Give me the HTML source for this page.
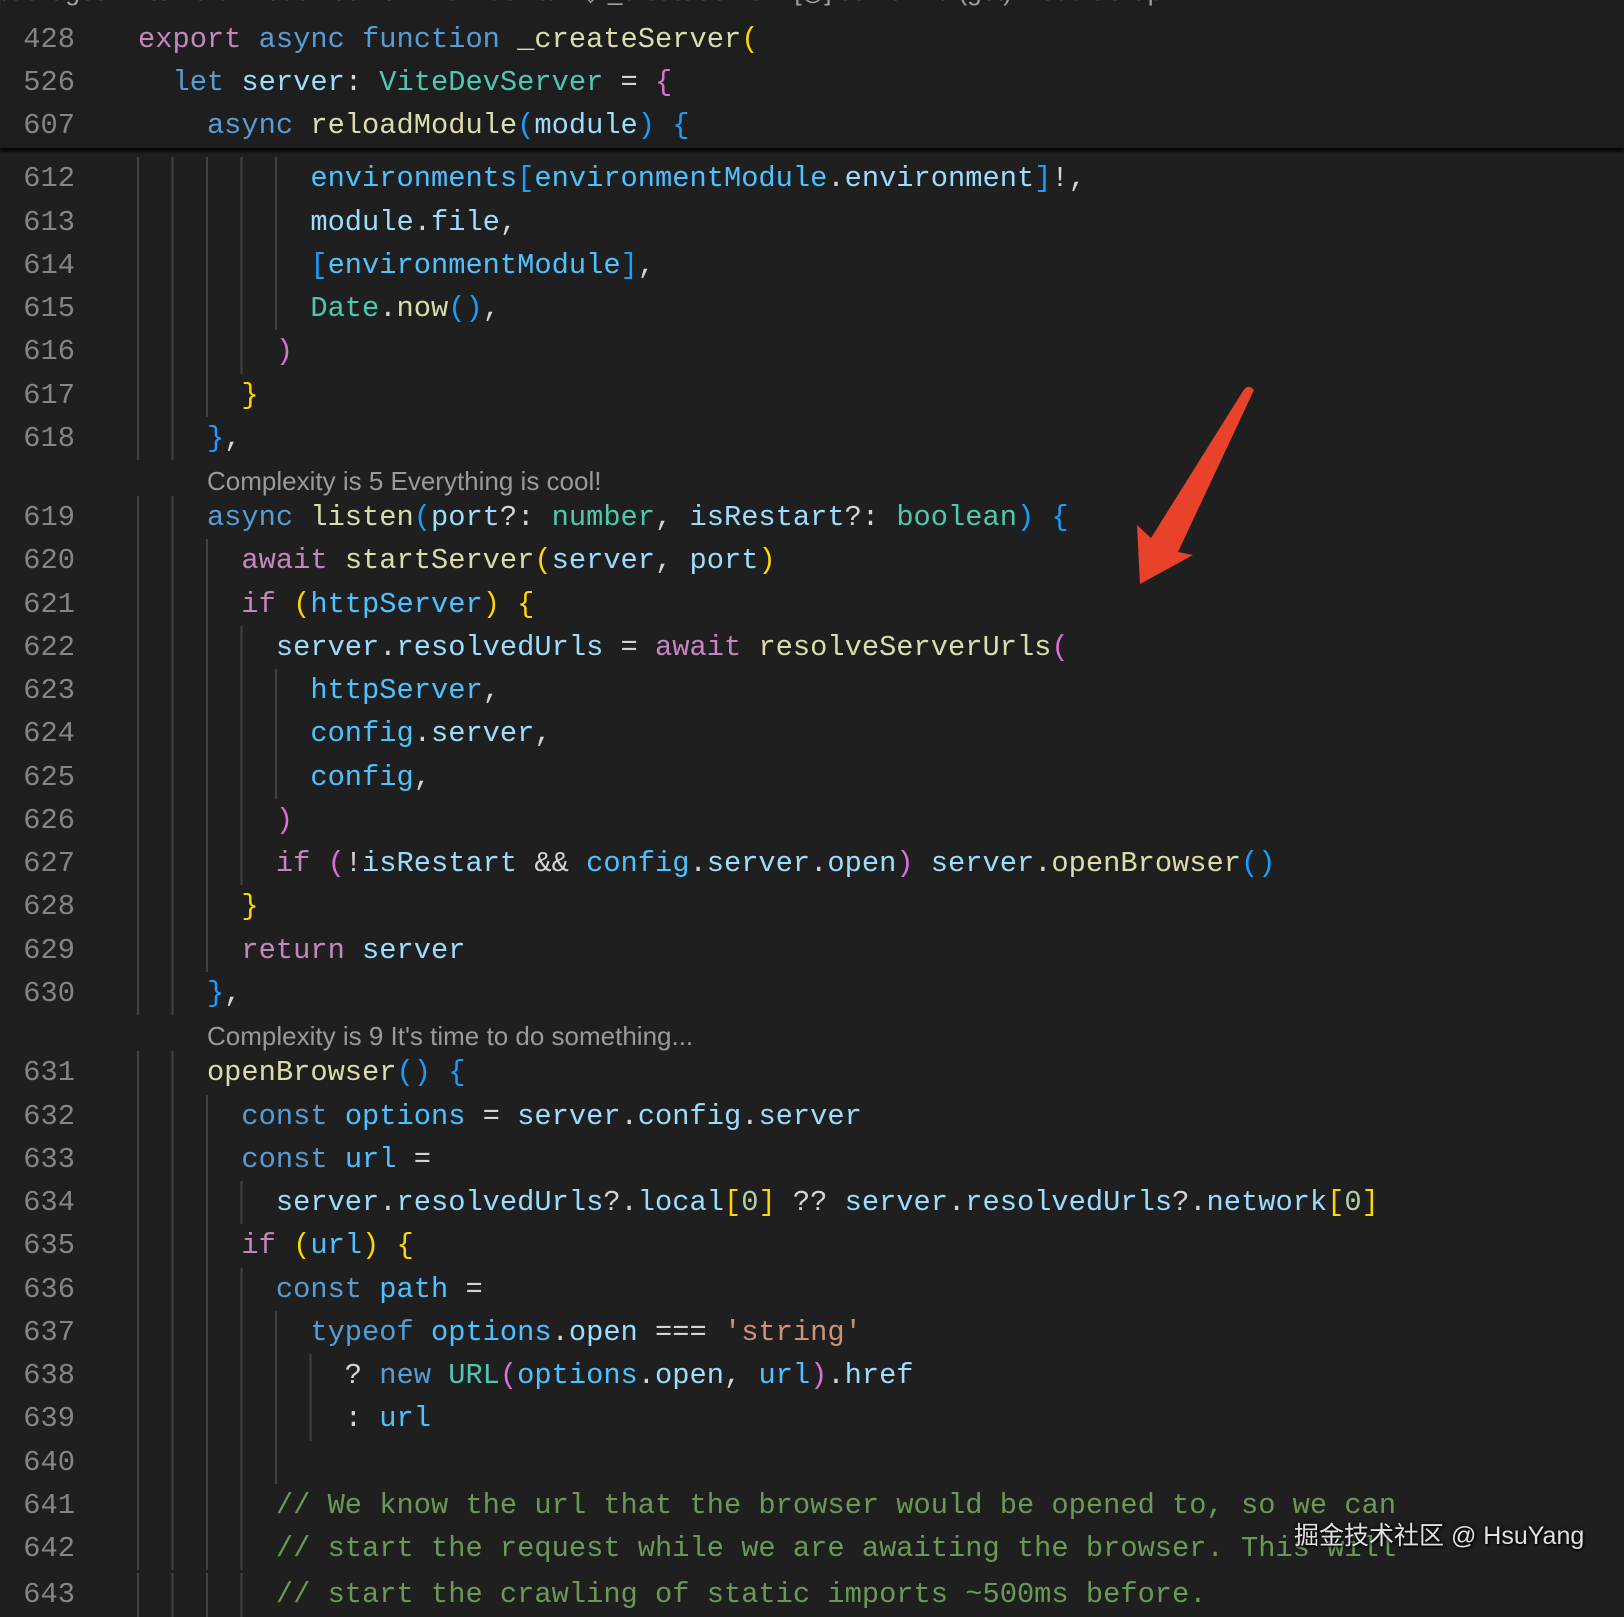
<!DOCTYPE html>
<html><head><meta charset="utf-8"><style>
html,body{margin:0;padding:0;}
body{width:1624px;height:1588px;background:#1f1f1f;position:relative;overflow:hidden;font-family:"Liberation Mono",monospace;font-size:28.72px;}
.l{position:absolute;left:0;width:1624px;height:43.24px;line-height:43.24px;}
.n{position:absolute;left:0;width:75px;text-align:right;color:#858585;}
.c{position:absolute;left:138px;white-space:pre;color:#d4d4d4;}
.g{position:absolute;left:137px;top:0;height:43.24px;background:repeating-linear-gradient(90deg,#424242 0 2px,transparent 2px 34.46px);}
.k{color:#c586c0}.s{color:#569cd6}.f{color:#dcdcaa}.v{color:#9cdcfe}.w{color:#4fc1ff}.t{color:#4ec9b0}
.b1{color:#ffd700}.b2{color:#da70d6}.b3{color:#179fff}.str{color:#ce9178}.cm{color:#6a9955}.nm{color:#b5cea8}
.lens{position:absolute;left:207px;font-family:"Liberation Sans",sans-serif;font-size:26px;color:#9a9a9a;line-height:30px;}
#hdr{position:absolute;left:0;top:0;width:1624px;height:148px;background:#1e1e1e;box-shadow:0 3px 4px #000;z-index:2;}
</style></head><body>
<div id="hdr">
<div style="position:absolute;left:-4px;top:-24px;font-family:'Liberation Sans',sans-serif;font-size:26px;color:#a0a0a0;white-space:pre;">packages › vite › src › node › server › TS index.ts › ◈ _createServer › [◎] server › ⟡ (get) moduleGraph</div>
<div class="l" style="top:18px"><span class="n">428</span><span class="c"><span class="k">export</span> <span class="s">async</span> <span class="s">function</span> <span class="f">_createServer</span><span class="b1">(</span></span></div>
<div class="l" style="top:61px"><span class="n">526</span><span class="c">  <span class="s">let</span> <span class="v">server</span>: <span class="t">ViteDevServer</span> = <span class="b2">{</span></span></div>
<div class="l" style="top:104px"><span class="n">607</span><span class="c">    <span class="s">async</span> <span class="f">reloadModule</span><span class="b3">(</span><span class="v">module</span><span class="b3">)</span> <span class="b3">{</span></span></div>
</div>

<div class="l" style="top:157.4px"><div class="g" style="width:172px"></div><span class="n">612</span><span class="c">          <span class="w">environments</span><span class="b3">[</span><span class="w">environmentModule</span>.<span class="v">environment</span><span class="b3">]</span>!,</span></div>
<div class="l" style="top:200.6px"><div class="g" style="width:172px"></div><span class="n">613</span><span class="c">          <span class="v">module</span>.<span class="v">file</span>,</span></div>
<div class="l" style="top:243.9px"><div class="g" style="width:172px"></div><span class="n">614</span><span class="c">          <span class="b3">[</span><span class="w">environmentModule</span><span class="b3">]</span>,</span></div>
<div class="l" style="top:287.1px"><div class="g" style="width:172px"></div><span class="n">615</span><span class="c">          <span class="t">Date</span>.<span class="f">now</span><span class="b3">()</span>,</span></div>
<div class="l" style="top:330.4px"><div class="g" style="width:138px"></div><span class="n">616</span><span class="c">        <span class="b2">)</span></span></div>
<div class="l" style="top:373.6px"><div class="g" style="width:103px"></div><span class="n">617</span><span class="c">      <span class="b1">}</span></span></div>
<div class="l" style="top:416.8px"><div class="g" style="width:69px"></div><span class="n">618</span><span class="c">    <span class="b3">}</span>,</span></div>
<div class="lens" style="top:465.6px">Complexity is 5 Everything is cool!</div>
<div class="l" style="top:496.2px"><div class="g" style="width:69px"></div><span class="n">619</span><span class="c">    <span class="s">async</span> <span class="f">listen</span><span class="b3">(</span><span class="v">port</span>?: <span class="t">number</span>, <span class="v">isRestart</span>?: <span class="t">boolean</span><span class="b3">)</span> <span class="b3">{</span></span></div>
<div class="l" style="top:539.4px"><div class="g" style="width:103px"></div><span class="n">620</span><span class="c">      <span class="k">await</span> <span class="f">startServer</span><span class="b1">(</span><span class="v">server</span>, <span class="v">port</span><span class="b1">)</span></span></div>
<div class="l" style="top:582.7px"><div class="g" style="width:103px"></div><span class="n">621</span><span class="c">      <span class="k">if</span> <span class="b1">(</span><span class="w">httpServer</span><span class="b1">)</span> <span class="b1">{</span></span></div>
<div class="l" style="top:625.9px"><div class="g" style="width:138px"></div><span class="n">622</span><span class="c">        <span class="v">server</span>.<span class="v">resolvedUrls</span> = <span class="k">await</span> <span class="f">resolveServerUrls</span><span class="b2">(</span></span></div>
<div class="l" style="top:669.2px"><div class="g" style="width:172px"></div><span class="n">623</span><span class="c">          <span class="w">httpServer</span>,</span></div>
<div class="l" style="top:712.4px"><div class="g" style="width:172px"></div><span class="n">624</span><span class="c">          <span class="w">config</span>.<span class="v">server</span>,</span></div>
<div class="l" style="top:755.6px"><div class="g" style="width:172px"></div><span class="n">625</span><span class="c">          <span class="w">config</span>,</span></div>
<div class="l" style="top:798.9px"><div class="g" style="width:138px"></div><span class="n">626</span><span class="c">        <span class="b2">)</span></span></div>
<div class="l" style="top:842.1px"><div class="g" style="width:138px"></div><span class="n">627</span><span class="c">        <span class="k">if</span> <span class="b2">(</span>!<span class="v">isRestart</span> &amp;&amp; <span class="w">config</span>.<span class="v">server</span>.<span class="v">open</span><span class="b2">)</span> <span class="v">server</span>.<span class="f">openBrowser</span><span class="b3">()</span></span></div>
<div class="l" style="top:885.4px"><div class="g" style="width:103px"></div><span class="n">628</span><span class="c">      <span class="b1">}</span></span></div>
<div class="l" style="top:928.6px"><div class="g" style="width:103px"></div><span class="n">629</span><span class="c">      <span class="k">return</span> <span class="v">server</span></span></div>
<div class="l" style="top:971.8px"><div class="g" style="width:69px"></div><span class="n">630</span><span class="c">    <span class="b3">}</span>,</span></div>
<div class="lens" style="top:1020.7px">Complexity is 9 It's time to do something...</div>
<div class="l" style="top:1051.4px"><div class="g" style="width:69px"></div><span class="n">631</span><span class="c">    <span class="f">openBrowser</span><span class="b3">()</span> <span class="b3">{</span></span></div>
<div class="l" style="top:1094.6px"><div class="g" style="width:103px"></div><span class="n">632</span><span class="c">      <span class="s">const</span> <span class="w">options</span> = <span class="v">server</span>.<span class="v">config</span>.<span class="v">server</span></span></div>
<div class="l" style="top:1137.9px"><div class="g" style="width:103px"></div><span class="n">633</span><span class="c">      <span class="s">const</span> <span class="w">url</span> =</span></div>
<div class="l" style="top:1181.1px"><div class="g" style="width:138px"></div><span class="n">634</span><span class="c">        <span class="v">server</span>.<span class="v">resolvedUrls</span>?.<span class="v">local</span><span class="b1">[</span><span class="nm">0</span><span class="b1">]</span> ?? <span class="v">server</span>.<span class="v">resolvedUrls</span>?.<span class="v">network</span><span class="b1">[</span><span class="nm">0</span><span class="b1">]</span></span></div>
<div class="l" style="top:1224.4px"><div class="g" style="width:103px"></div><span class="n">635</span><span class="c">      <span class="k">if</span> <span class="b1">(</span><span class="w">url</span><span class="b1">)</span> <span class="b1">{</span></span></div>
<div class="l" style="top:1267.6px"><div class="g" style="width:138px"></div><span class="n">636</span><span class="c">        <span class="s">const</span> <span class="w">path</span> =</span></div>
<div class="l" style="top:1310.8px"><div class="g" style="width:172px"></div><span class="n">637</span><span class="c">          <span class="s">typeof</span> <span class="w">options</span>.<span class="v">open</span> === <span class="str">'string'</span></span></div>
<div class="l" style="top:1354.1px"><div class="g" style="width:207px"></div><span class="n">638</span><span class="c">            ? <span class="s">new</span> <span class="t">URL</span><span class="b2">(</span><span class="w">options</span>.<span class="v">open</span>, <span class="w">url</span><span class="b2">)</span>.<span class="v">href</span></span></div>
<div class="l" style="top:1397.3px"><div class="g" style="width:207px"></div><span class="n">639</span><span class="c">            : <span class="w">url</span></span></div>
<div class="l" style="top:1440.6px"><div class="g" style="width:172px"></div><span class="n">640</span><span class="c"></span></div>
<div class="l" style="top:1483.8px"><div class="g" style="width:138px"></div><span class="n">641</span><span class="c">        <span class="cm">// We know the url that the browser would be opened to, so we can</span></span></div>
<div class="l" style="top:1527.0px"><div class="g" style="width:138px"></div><span class="n">642</span><span class="c">        <span class="cm">// start the request while we are awaiting the browser. This will</span></span></div>
<div class="l" style="top:1573.3px"><div class="g" style="width:138px"></div><span class="n">643</span><span class="c">        <span class="cm">// start the crawling of static imports ~500ms before.</span></span></div>

<svg style="position:absolute;left:0;top:0;z-index:4" width="1624" height="1588"><path d="M1243,391 Q1248,383 1254,390 L1178,552 L1193,555 L1140,584 L1137,525 L1151,538 Z" fill="#e8432a"/></svg>
<div style="position:absolute;left:1294px;top:1516px;font-family:'Liberation Sans','Noto Sans CJK SC',sans-serif;font-size:25px;color:#e0e0e0;text-shadow:0 0 4px #000,1px 1px 2px #000;white-space:pre;z-index:5">掘金技术社区 @ HsuYang</div>
</body></html>
